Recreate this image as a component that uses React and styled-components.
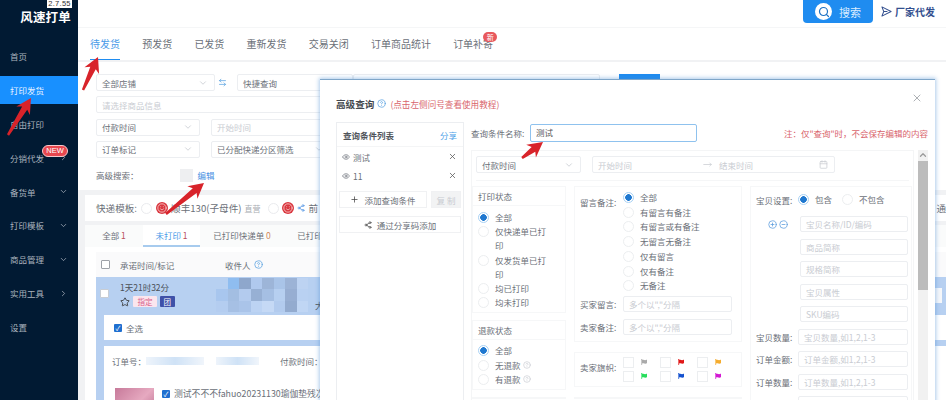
import React from 'react'
import styled, {createGlobalStyle} from 'styled-components'
import {ChevronDown, ChevronRight, X, Plus, Share2, Eye, CircleHelp, Calendar, Star, Search, ArrowLeftRight, CirclePlus, CircleMinus, Smile, ChevronUp, MoveRight} from 'lucide-react'
import {FaFlag} from 'react-icons/fa'

const Blue = '#1f8cf0'
const Line = '#eceef1'
const Faint = '#c9ccd2'
const Text = '#6b7078'

const GlobalStyle = createGlobalStyle`
html, body {
  margin: 0;
  padding: 0;
  background: #f1f2f4;
}
* { box-sizing: border-box; }
body {
  font-family: "Noto Sans CJK SC", "Liberation Sans", sans-serif;
  font-size: 8.5px;
  color: ${Text};
}
`

const Shell = styled.div`
position: relative;
width: 946px;
height: 400px;
display: flex;
overflow: hidden;
`
const Sidebar = styled.div`
width: 78px;
flex: none;
background: #011a33;
color: #a9b2bd;
`
const Logo = styled.div`
height: 42px;
display: flex;
flex-direction: column;
align-items: flex-end;
padding-right: 7px;
color: #fff;
`
const Version = styled.div`
width: 25px;
height: 8px;
margin-right: -1px;
background: #fff;
color: #333;
font-family: "Liberation Sans", sans-serif;
font-size: 7.5px;
line-height: 8px;
text-align: center;
letter-spacing: .3px;
`
const LogoName = styled.div`
font-size: 12.5px;
font-weight: 700;
line-height: 18px;
letter-spacing: .2px;
`
const Nav = styled.div`
display: flex;
flex-direction: column;
gap: 5.9px;
`
const NavItem = styled.div`
position: relative;
height: 28px;
padding: 0 10px;
display: flex;
align-items: center;
justify-content: space-between;
background: ${props => props.$active ? '#1890ff' : 'transparent'};
color: ${props => props.$active ? '#e8f3ff' : '#a9b2bd'};
`
const NewBadge = styled.span`
position: absolute;
left: 42px;
top: 1px;
width: 26px;
height: 12px;
border-radius: 7px;
background: #e8474f;
border: 1px solid #f5c9cc;
color: #fff;
font-family: "Liberation Sans", sans-serif;
font-size: 7.5px;
line-height: 10px;
text-align: center;
`
const Main = styled.div`
flex: 1;
min-width: 0;
display: flex;
flex-direction: column;
`
const Header = styled.div`
height: 28px;
flex: none;
background: #fff;
display: flex;
justify-content: flex-end;
align-items: flex-start;
padding-right: 11px;
border-bottom: 1px solid #f5f6f7;
`
const SearchButton = styled.div`
width: 70px;
height: 23px;
background: ${Blue};
border-radius: 0 0 4px 4px;
color: #dcecff;
font-size: 11px;
display: flex;
align-items: center;
justify-content: center;
gap: 7px;
`
const SearchDot = styled.span`
width: 17px;
height: 17px;
border-radius: 50%;
background: #fff;
color: #1d72c4;
display: flex;
align-items: center;
justify-content: center;
`
const Factory = styled.div`
height: 23px;
margin-left: 8px;
display: flex;
align-items: center;
gap: 3px;
color: #34508f;
font-size: 10px;
font-weight: 700;
`
const Tabs = styled.div`
height: 32px;
flex: none;
background: #fff;
display: flex;
gap: 22.2px;
padding-left: 12px;
`
const Tab = styled.div`
position: relative;
font-size: 10px;
line-height: 32px;
color: ${props => props.$active ? '#4a9be8' : Text};
border-bottom: ${props => props.$active ? `1px solid ${Blue}` : '0'};
`
const NewDot = styled.span`
position: absolute;
right: -4px;
top: 4px;
width: 14px;
height: 10px;
border-radius: 5px;
background: #e8585c;
color: #fff;
font-size: 7px;
line-height: 10px;
text-align: center;
`
const Filter = styled.div`
height: 128px;
flex: none;
margin-top: 2px;
background: #fff;
padding: 12px 0 0 18px;
display: flex;
flex-direction: column;
gap: 5.3px;
`
const FilterRow = styled.div`
display: flex;
align-items: center;
gap: ${props => props.$gap ?? 11}px;
`
const Field = styled.div`
width: ${props => props.$w}px;
height: ${props => props.$h || 17}px;
flex: none;
border: 1px solid ${Line};
border-radius: 2px;
background: #fff;
padding: 0 6px 0 5px;
display: flex;
align-items: center;
justify-content: space-between;
color: ${props => props.$holder ? Faint : Text};
white-space: nowrap;
`
const DateRange = styled(Field)`
display: grid;
grid-template-columns: 105px 16px 1fr auto;
`
const SmallButton = styled.div`
width: 41px;
height: 17px;
background: ${Blue};
margin-left: 19px;
`
const SwapIcon = styled.span`
display: flex;
margin: 0 10px 0 3px;
color: #5aa2e0;
`
const AdvancedRow = styled.div`
display: flex;
align-items: center;
margin-top: 4.7px;
height: 15px;
`
const GhostBox = styled.span`
width: 13px;
height: 13px;
background: #eeeff1;
margin-left: 41px;
`
const EditLink = styled.span`
color: #4a90e2;
margin-left: 5px;
`
const TemplateCard = styled.div`
height: 26px;
flex: none;
margin: 5px 0 0 7px;
background: #fff;
padding-left: 11px;
display: flex;
align-items: center;
font-size: 9.6px;
white-space: nowrap;
overflow: hidden;
`
const TemplateOption = styled.span`
display: flex;
align-items: center;
gap: 3px;
margin-left: ${props => props.$left || 0}px;
`
const LastOption = styled(TemplateOption)`
margin-left: auto;
`
const OwnTag = styled.span`
font-size: 8px;
color: #a9adb3;
`
const EmptyRadio = styled.span`
width: 11px;
height: 11px;
flex: none;
margin-left: ${props => props.$left || 0}px;
border-radius: 50%;
border: 1px solid #eaebee;
background: #fff;
`
const RedFace = styled.span`
width: 12px;
height: 12px;
border-radius: 50%;
background: #d9363e;
color: #fbd3d3;
display: flex;
align-items: center;
justify-content: center;
`
const OrderCard = styled.div`
flex: 1;
margin: 4px 0 0 7px;
background: #fff;
min-height: 0;
`
const StatusTabs = styled.div`
height: 22px;
display: flex;
background: #fafbfb;
white-space: nowrap;
`
const StatusTab = styled.div`
width: ${props => props.$w}px;
text-align: center;
line-height: 21px;
background: ${props => props.$active ? '#fff' : 'transparent'};
color: ${props => props.$active ? '#4a9be8' : Text};
border-bottom: 2px solid ${props => props.$active ? '#a7cbee' : 'transparent'};
`
const Count = styled.span`
color: ${props => props.$zero ? '#d08a5c' : '#b9505a'};
`
const TableHead = styled.div`
height: 25px;
margin: 5px 0 0 11px;
background: #fafafb;
display: grid;
grid-template-columns: 19px 105px auto;
align-items: center;
padding-left: 5px;
`
const Check = styled.span`
width: 9px;
height: 9px;
flex: none;
border: 1px solid #9ea2a8;
border-radius: 1px;
background: #fff;
`
const BlueCheck = styled.span`
width: 8px;
height: 8px;
flex: none;
border-radius: 1px;
background: #1f6fd0;
color: #fff;
display: flex;
align-items: center;
justify-content: center;
font-size: 7px;
line-height: 8px;
`
const Receiver = styled.span`
display: flex;
align-items: center;
gap: 3px;
`
const OrderBlock = styled.div`
margin-left: 11px;
background: #b7d0f1;
height: 130px;
`
const OrderTop = styled.div`
height: 38px;
display: flex;
padding-left: 4px;
color: #4a4f57;
`
const TopCheck = styled(Check)`
margin-top: 12px;
border-color: #c8cdd4;
`
const Promise = styled.div`
margin-left: 11px;
padding-top: 4px;
width: 96px;
line-height: 13px;
`
const Tags = styled.div`
display: flex;
align-items: center;
gap: 3px;
margin-top: 2px;
`
const Tag = styled.span`
height: 11px;
padding: 0 ${props => props.$pad}px;
border-radius: 1px;
font-size: 7.5px;
line-height: 11px;
background: ${props => props.$bg};
color: ${props => props.$color};
`
const Mosaic = styled.div`
width: 92px;
height: 34px;
margin-top: 1px;
display: grid;
grid-template-columns: repeat(8, 1fr);
grid-template-rows: repeat(3, 1fr);
`
const MosaicCell = styled.span`
background: ${props => props.$c};
`
const Big = styled.span`
align-self: flex-end;
margin: 0 0 4px 7px;
`
const PageEnd = styled.span`
width: 12px;
height: 15px;
background: #f5f7fa;
margin: 11px 4px 0 auto;
`
const SelectAll = styled.div`
height: 25px;
margin-left: 8px;
background: #fff;
display: flex;
align-items: center;
gap: 4px;
padding-left: 10px;
`
const OrderInner = styled.div`
height: 60px;
margin: 6px 0 0 8px;
background: #fff;
padding: 9px 0 0 8px;
`
const OrderLine = styled.div`
display: flex;
align-items: center;
height: 12px;
white-space: nowrap;
`
const Smudge = styled.span`
width: ${props => props.$w}px;
height: 8px;
margin-left: ${props => props.$left || 0}px;
background: linear-gradient(90deg, #eef4fb, #cfe2f6 50%, #f0f5fb);
filter: blur(.7px);
`
const PayTime = styled.span`
margin-left: 21px;
`
const GoodsLine = styled.div`
display: flex;
gap: 8px;
margin-top: 21px;
white-space: nowrap;
`
const GoodsPic = styled.span`
width: 39px;
height: 30px;
flex: none;
margin-left: 3px;
background: linear-gradient(135deg, #c77a9a, #e6a9c0 55%, #b76a8c);
`
const GoodsName = styled.span`
display: flex;
align-items: center;
gap: 4px;
height: 11px;
font-size: 8.8px;
`

const Modal = styled.div`
position: absolute;
left: 320px;
top: 79px;
width: 615px;
height: 340px;
background: #fff;
border-top: 1px solid #7fa6c9;
box-shadow: 0 0 4px 1px rgba(70, 140, 210, .45);
padding: 16px 7px 0 16px;
`
const CloseButton = styled.span`
position: absolute;
right: 12px;
top: 12px;
color: #8a8e94;
display: flex;
`
const ModalTitle = styled.div`
height: 15px;
display: flex;
align-items: center;
gap: 3px;
font-size: 9.6px;
font-weight: 700;
color: #45494f;
`
const TitleHint = styled.span`
font-size: 8.6px;
font-weight: 400;
color: #d9646c;
margin-left: 1px;
`
const HelpIcon = styled.span`
color: #5aa2e0;
display: flex;
`
const ModalBody = styled.div`
display: flex;
gap: 7px;
margin-top: 11px;
`
const ListPanel = styled.div`
width: 128px;
height: 290px;
flex: none;
border: 1px solid ${Line};
`
const ListHead = styled.div`
height: 24px;
display: flex;
align-items: center;
justify-content: space-between;
padding: 0 6px;
font-weight: 700;
color: #50545a;
border-bottom: 1px solid #f4f5f6;
`
const ShareLink = styled.span`
font-weight: 400;
color: #4fa3e8;
`
const ListItem = styled.div`
height: 19px;
display: flex;
align-items: center;
gap: 3px;
padding: 0 6px 0 5px;
`
const Grow = styled.span`
flex: 1;
`
const ListButtons = styled.div`
display: grid;
grid-template-columns: 88px 30px;
gap: 4px;
padding: 0 2px;
margin-top: 6px;
`
const ListButton = styled.div`
height: 17px;
grid-column: ${props => props.$wide ? '1 / 3' : 'auto'};
border: 1px solid #f0f1f3;
display: flex;
align-items: center;
justify-content: center;
gap: 5px;
margin-bottom: ${props => props.$wide ? 0 : 4}px;
background: ${props => props.$off ? '#f2f3f4' : '#fff'};
color: ${props => props.$off ? Faint : Text};
`
const QueryPanel = styled.div`
flex: 1;
min-width: 0;
`
const NameRow = styled.div`
height: 18px;
margin-top: 2px;
display: flex;
align-items: center;
white-space: nowrap;
`
const NameLabel = styled.span`
width: 59px;
flex: none;
`
const NameInput = styled.div`
width: 167px;
height: 18px;
border: 1px solid #8fc2ee;
border-radius: 2px;
padding-left: 5px;
line-height: 15px;
color: #555;
`
const NameNote = styled.span`
margin-left: auto;
font-size: 8.5px;
color: #d9646c;
`
const ScrollBox = styled.div`
display: flex;
margin-top: 8px;
height: 260px;
`
const ScrollContent = styled.div`
flex: 1;
min-width: 0;
border: 1px solid #f4f5f6;
border-bottom: 0;
padding: 5px 4px 0;
`
const Scrollbar = styled.div`
width: 10px;
margin-left: 4px;
flex: none;
background: #f1f1f1;
display: flex;
flex-direction: column;
align-items: center;
color: #9a9a9a;
`
const ScrollThumb = styled.div`
width: 100%;
height: 129px;
margin-top: 1px;
background: #bcbcbc;
`
const TimeRow = styled.div`
height: 25px;
display: flex;
gap: 11px;
border-bottom: 1px solid #f5f6f7;
`
const ColumnGrid = styled.div`
display: grid;
grid-template-columns: 94px 168px 162px;
gap: 8px;
margin: 5px 0 0 -4px;
`
const Column = styled.div`
display: flex;
flex-direction: column;
gap: ${props => props.$gap}px;
`
const Box = styled.div`
border: 1px solid #f6f7f8;
padding: ${props => props.$pad || '0'};
`
const BoxTitle = styled.div`
height: 19px;
line-height: 19px;
padding-left: 5px;
border-bottom: 1px solid #f6f7f8;
`
const RadioList = styled.div`
display: flex;
flex-direction: column;
line-height: ${props => props.$lh || 14.2}px;
padding: ${props => props.$pad || '4px 0 3px 5px'};
`
const RadioRow = styled.div`
display: flex;
align-items: flex-start;
gap: 6px;
`
const RadioMark = styled.span`
width: 11px;
height: 11px;
flex: none;
margin-top: 2px;
border-radius: 50%;
border: 1px solid ${props => props.$on ? '#a9d2f5' : '#eceef0'};
background: ${props => props.$on ? 'radial-gradient(circle, #1f78d0 0 3px, #fff 3.6px)' : '#fff'};
`
const RadioText = styled.span`
width: ${props => props.$w ? props.$w + 'px' : 'auto'};
display: flex;
align-items: center;
gap: 2px;
`
const LabelRow = styled.div`
display: flex;
align-items: ${props => props.$top ? 'flex-start' : 'center'};
margin-top: ${props => props.$mt || 0}px;
white-space: nowrap;
`
const Label = styled.span`
width: ${props => props.$w || 43}px;
flex: none;
padding-top: ${props => props.$pt || 0}px;
`
const Flags = styled.div`
display: grid;
grid-template-columns: repeat(3, 37px);
row-gap: 3px;
`
const FlagItem = styled.span`
display: flex;
align-items: center;
gap: 7px;
color: ${props => props.$c};
`
const FlagBox = styled.span`
width: 11px;
height: 11px;
border: 1px solid #eceef0;
`
const Stepper = styled.span`
width: 44px;
flex: none;
display: flex;
justify-content: flex-end;
gap: 2px;
padding-right: 12px;
color: #5a9bdc;
`
const InlineRadio = styled(RadioRow)`
line-height: 15px;
margin-right: 10px;
`
const ArrowLayer = styled.svg`
position: absolute;
left: 0;
top: 0;
pointer-events: none;
`

const navs = [
  {name: '首页'},
  {name: '打印发货', active: true},
  {name: '自由打印'},
  {name: '分销代发', icon: 'right', badge: true},
  {name: '备货单', icon: 'down'},
  {name: '打印模板', icon: 'down'},
  {name: '商品管理', icon: 'down'},
  {name: '实用工具', icon: 'right'},
  {name: '设置'},
]
const tabs = ['待发货', '预发货', '已发货', '重新发货', '交易关闭', '订单商品统计', '订单补寄']
const mosaic = ['#b7d0f1', '#8fbdf0', '#8ea7cc', '#b0c9ee', '#9db5d8', '#a9c4e8', '#9cb3d6', '#bdd3f2',
  '#a8c6ee', '#a3bee2', '#b3cbee', '#97b0d4', '#a5bfe3', '#b6cff0', '#97aed2', '#b9d1f2',
  '#b4cdf0', '#a6c0e4', '#aac4e9', '#bcd3f3', '#c5d9f5', '#b2cbee', '#93abcf', '#c0d6f4']
const flags = ['#aaa', '#e01818', '#f5ac2e', '#27de5c', '#1552cf', '#d318d3']
const goodsFields = ['宝贝名称/ID/编码', '商品简称', '规格简称', '宝贝属性', 'SKU编码']
const rangeFields = [['宝贝数量', '宝贝数量,如1,2,1-3'], ['订单金额', '订单金额,如1,2,1-3'], ['订单数量', '订单数量,如1,2,1-3'], ['', '']]
const arrows = [[83, 90, 98, 57], [8, 135, 31, 98], [166, 214, 204, 183], [522, 158, 543, 142]]

function RadioOption({on, w, children}) {
  return (
    <RadioRow>
      <RadioMark $on={on} />
      <RadioText $w={w}>{children}</RadioText>
    </RadioRow>
  )
}

// red hand drawn arrows that sit over the page
function Arrow({from, to}) {
  const [x1, y1] = from
  const [x2, y2] = to
  const a = Math.atan2(y2 - y1, x2 - x1)
  const point = (back, side) => {
    const x = x2 - Math.cos(a) * back - Math.sin(a) * side
    const y = y2 - Math.sin(a) * back + Math.cos(a) * side
    return `${x},${y}`
  }
  const len = Math.hypot(x2 - x1, y2 - y1)
  const body = `${point(len, 1.2)} ${point(12, 3)} ${point(15, 8)} ${x2},${y2} ${point(15, -8)} ${point(12, -3)} ${point(len, -1.2)}`
  return <polygon points={body} fill="#d8232a" />
}

export default function App() {
  return (
    <Shell>
      <GlobalStyle />
      <Sidebar>
        <Logo>
          <Version>2.7.55</Version>
          <LogoName>风速打单</LogoName>
        </Logo>
        <Nav>
          {navs.map(n => (
            <NavItem key={n.name} $active={n.active}>
              {n.name}
              {n.badge && <NewBadge>NEW</NewBadge>}
              {n.icon === 'down' && <ChevronDown size={9} />}
              {n.icon === 'right' && <ChevronRight size={9} />}
            </NavItem>
          ))}
        </Nav>
      </Sidebar>
      <Main>
        <Header>
          <SearchButton>
            <SearchDot><Search size={12} strokeWidth={2.4} /></SearchDot>
            搜索
          </SearchButton>
          <Factory>
            <svg width="11" height="11" viewBox="0 0 12 12" fill="none" stroke="currentColor" strokeWidth="1.1" strokeLinejoin="round">
              <path d="M1 1 L11 6 L1 11 L3 6 Z M3 6 H7" />
            </svg>
            厂家代发
          </Factory>
        </Header>
        <Tabs>
          {tabs.map((t, i) => (
            <Tab key={t} $active={i === 0}>
              {t}
              {t === '订单补寄' && <NewDot>新</NewDot>}
            </Tab>
          ))}
        </Tabs>
        <Filter>
          <FilterRow $gap={0}>
            <Field $w={119}>全部店铺<ChevronDown size={10} color={Faint} /></Field>
            <SwapIcon><ArrowLeftRight size={9} /></SwapIcon>
            <Field $w={116}>快捷查询</Field>
            <Field $w={247} $holder />
            <SmallButton />
          </FilterRow>
          <FilterRow>
            <Field $w={545} $holder>请选择商品信息</Field>
          </FilterRow>
          <FilterRow>
            <Field $w={104}>付款时间<ChevronDown size={10} color={Faint} /></Field>
            <Field $w={200} $holder>开始时间</Field>
          </FilterRow>
          <FilterRow>
            <Field $w={104}>订单标记<ChevronDown size={10} color={Faint} /></Field>
            <Field $w={120}>已分配快递分区筛选<ChevronDown size={10} color={Faint} /></Field>
          </FilterRow>
          <AdvancedRow>
            高级搜索：
            <GhostBox />
            <EditLink>编辑</EditLink>
          </AdvancedRow>
        </Filter>
        <TemplateCard>
          快递模板:
          <EmptyRadio $left={4} />
          <TemplateOption $left={4}><RedFace><Smile size={10} /></RedFace>顺丰130(子母件)<OwnTag>直营</OwnTag></TemplateOption>
          <TemplateOption $left={8}><EmptyRadio /><RedFace><Smile size={10} /></RedFace><Share2 size={8} color="#4a90e2" />前</TemplateOption>
          <LastOption>通</LastOption>
        </TemplateCard>
        <OrderCard>
          <StatusTabs>
            <StatusTab $w={58}>全部 <Count>1</Count></StatusTab>
            <StatusTab $w={57} $active>未打印 <Count>1</Count></StatusTab>
            <StatusTab $w={84}>已打印快递单 <Count $zero>0</Count></StatusTab>
            <StatusTab $w={84}>已打印发货单 <Count $zero>0</Count></StatusTab>
          </StatusTabs>
          <TableHead>
            <Check />
            <span>承诺时间/标记</span>
            <Receiver>收件人<CircleHelp size={9} color="#5aa2e0" /></Receiver>
          </TableHead>
          <OrderBlock>
            <OrderTop>
              <TopCheck />
              <Promise>
                1天21时32分
                <Tags>
                  <Star size={10} color="#333" />
                  <Tag $pad={4.5} $bg="#fbe6ee" $color="#d8608a">指定</Tag>
                  <Tag $pad={3.5} $bg="#3f51a8" $color="#fff">团</Tag>
                </Tags>
              </Promise>
              <Mosaic>
                {mosaic.map((c, i) => <MosaicCell key={i} $c={c} />)}
              </Mosaic>
              <Big>大</Big>
              <PageEnd />
            </OrderTop>
            <SelectAll><BlueCheck>✓</BlueCheck>全选</SelectAll>
            <OrderInner>
              <OrderLine>
                订单号：
                <Smudge $w={58} />
                <Smudge $w={43} $left={12} />
                <PayTime>付款时间：</PayTime>
              </OrderLine>
              <GoodsLine>
                <GoodsPic />
                <GoodsName><BlueCheck>✓</BlueCheck>测试不不不fahuo20231130瑜伽垫残次品</GoodsName>
              </GoodsLine>
            </OrderInner>
          </OrderBlock>
        </OrderCard>
      </Main>

      <Modal>
        <CloseButton><X size={12} strokeWidth={1.4} /></CloseButton>
        <ModalTitle>
          高级查询
          <HelpIcon><CircleHelp size={9} /></HelpIcon>
          <TitleHint>(点击左侧问号查看使用教程)</TitleHint>
        </ModalTitle>
        <ModalBody>
          <ListPanel>
            <ListHead>查询条件列表<ShareLink>分享</ShareLink></ListHead>
            <ListItem><Eye size={8} />测试<Grow /><X size={9} color="#555" /></ListItem>
            <ListItem><Eye size={8} />11<Grow /><X size={9} color="#555" /></ListItem>
            <ListButtons>
              <ListButton><Plus size={9} color="#444" />添加查询条件</ListButton>
              <ListButton $off>复 制</ListButton>
              <ListButton $wide><Share2 size={8} color="#444" />通过分享码添加</ListButton>
            </ListButtons>
          </ListPanel>
          <QueryPanel>
            <NameRow>
              <NameLabel>查询条件名称:</NameLabel>
              <NameInput>测试</NameInput>
              <NameNote>注：仅"查询"时，不会保存编辑的内容</NameNote>
            </NameRow>
            <ScrollBox>
              <ScrollContent>
                <TimeRow>
                  <Field $w={105}>付款时间<ChevronDown size={10} color={Faint} /></Field>
                  <DateRange $w={243} $holder>
                    开始时间
                    <MoveRight size={9} />
                    <span>结束时间</span>
                    <Calendar size={9} />
                  </DateRange>
                </TimeRow>
                <ColumnGrid>
                  <Column $gap={7}>
                    <Box>
                      <BoxTitle>打印状态</BoxTitle>
                      <RadioList>
                        <RadioOption on>全部</RadioOption>
                        <RadioOption w={58}>仅快递单已打印</RadioOption>
                        <RadioOption w={58}>仅发货单已打印</RadioOption>
                        <RadioOption>均已打印</RadioOption>
                        <RadioOption>均未打印</RadioOption>
                      </RadioList>
                    </Box>
                    <Box>
                      <BoxTitle>退款状态</BoxTitle>
                      <RadioList $pad="3px 0 3px 5px">
                        <RadioOption on>全部</RadioOption>
                        <RadioOption>无退款<CircleHelp size={8} color={Faint} /></RadioOption>
                        <RadioOption>有退款<CircleHelp size={8} color={Faint} /></RadioOption>
                      </RadioList>
                    </Box>
                    <Box />
                  </Column>
                  <Column $gap={10}>
                    <Box $pad="3px 0 6px 5px">
                      <LabelRow $top>
                        <Label $pt={6}>留言备注:</Label>
                        <RadioList $pad="0" $lh={14.7}>
                          <RadioOption on>全部</RadioOption>
                          <RadioOption>有留言有备注</RadioOption>
                          <RadioOption>有留言或有备注</RadioOption>
                          <RadioOption>无留言无备注</RadioOption>
                          <RadioOption>仅有留言</RadioOption>
                          <RadioOption>仅有备注</RadioOption>
                          <RadioOption>无备注</RadioOption>
                        </RadioList>
                      </LabelRow>
                      <LabelRow $mt={3}>
                        <Label>买家留言:</Label>
                        <Field $w={109} $h={16} $holder>多个以","分隔</Field>
                      </LabelRow>
                      <LabelRow $mt={7}>
                        <Label>卖家备注:</Label>
                        <Field $w={109} $h={16} $holder>多个以","分隔</Field>
                      </LabelRow>
                    </Box>
                    <Box $pad="4px 0 4px 5px">
                      <LabelRow $top>
                        <Label $pt={4}>卖家旗帜:</Label>
                        <Flags>
                          {flags.map(c => (
                            <FlagItem key={c} $c={c}><FlagBox /><FaFlag size={6} /></FlagItem>
                          ))}
                        </Flags>
                      </LabelRow>
                    </Box>
                    <Box />
                  </Column>
                  <Box $pad="5px 0 0 5px">
                    <LabelRow>
                      <Label $w={42}>宝贝设置:</Label>
                      <InlineRadio><RadioMark $on />包含</InlineRadio>
                      <InlineRadio><RadioMark />不包含</InlineRadio>
                    </LabelRow>
                    {goodsFields.map((g, i) => (
                      <LabelRow key={g} $mt={i === 0 ? 9 : 6.5}>
                        {i === 0 ? <Stepper><CirclePlus size={9} /><CircleMinus size={9} /></Stepper> : <Stepper />}
                        <Field $w={108} $h={16} $holder>{g}</Field>
                      </LabelRow>
                    ))}
                    {rangeFields.map(([l, h]) => (
                      <LabelRow key={l} $mt={6.5}>
                        <Label $w={42}>{l && l + ':'}</Label>
                        <Field $w={110} $h={16} $holder>{h}</Field>
                      </LabelRow>
                    ))}
                  </Box>
                </ColumnGrid>
              </ScrollContent>
              <Scrollbar>
                <ChevronUp size={10} strokeWidth={3} />
                <ScrollThumb />
              </Scrollbar>
            </ScrollBox>
          </QueryPanel>
        </ModalBody>
      </Modal>

      <ArrowLayer width="946" height="400">
        {arrows.map(([x1, y1, x2, y2]) => <Arrow key={x1} from={[x1, y1]} to={[x2, y2]} />)}
      </ArrowLayer>
    </Shell>
  )
}
